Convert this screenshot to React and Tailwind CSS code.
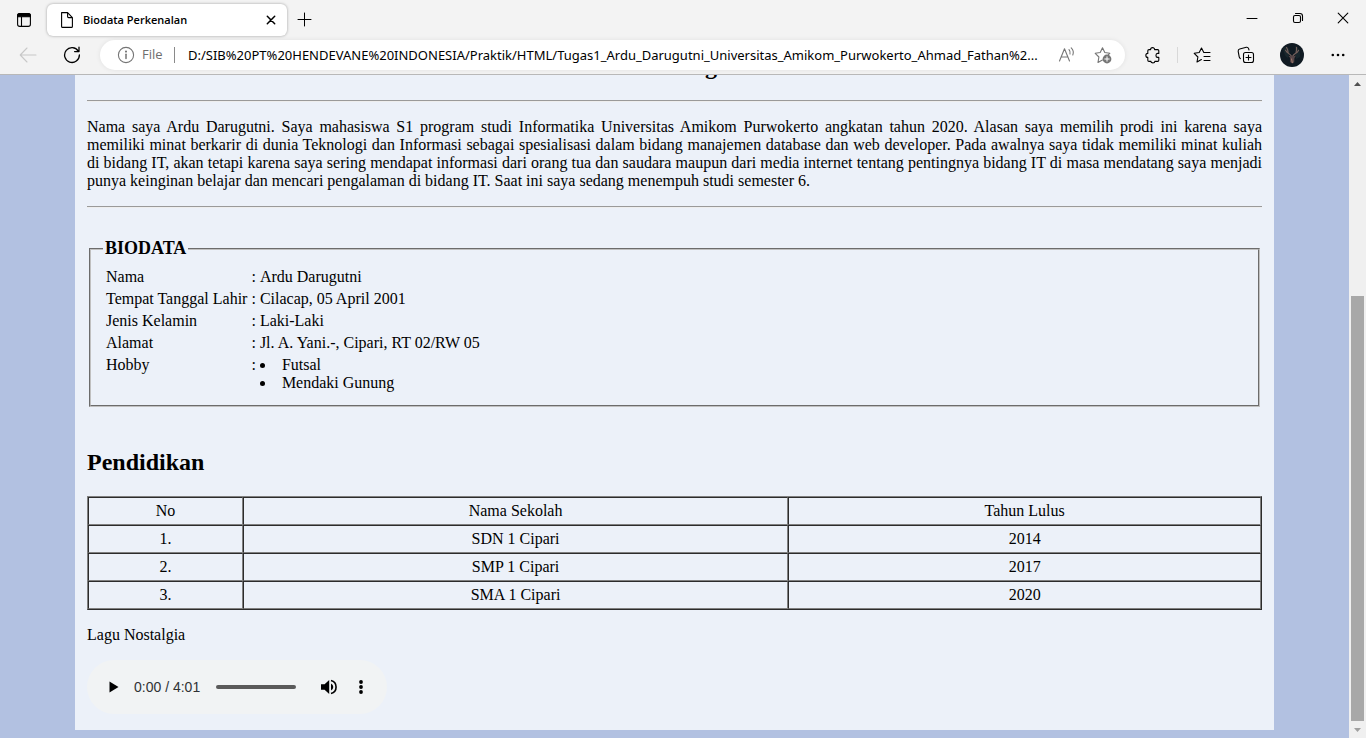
import React from "react";

const biodata = [
  ["Nama", "Ardu Darugutni"],
  ["Tempat Tanggal Lahir", "Cilacap, 05 April 2001"],
  ["Jenis Kelamin", "Laki-Laki"],
  ["Alamat", "Jl. A. Yani.-, Cipari, RT 02/RW 05"],
];

const schools = [
  ["1.", "SDN 1 Cipari", "2014"],
  ["2.", "SMP 1 Cipari", "2017"],
  ["3.", "SMA 1 Cipari", "2020"],
];

function Icon({ size = 18, children, className = "" }) {
  return (
    <svg
      width={size}
      height={size}
      viewBox={`0 0 ${size} ${size}`}
      fill="none"
      stroke="currentColor"
      strokeWidth="1.1"
      strokeLinecap="round"
      strokeLinejoin="round"
      className={`shrink-0 ${className}`}
      aria-hidden="true"
    >
      {children}
    </svg>
  );
}

function IconButton({ label, className = "", children }) {
  return (
    <button type="button" aria-label={label} className={`flex h-8 shrink-0 items-center justify-center ${className}`}>
      {children}
    </button>
  );
}

function TabStrip() {
  return (
    <div className="flex h-10 items-start">
      <IconButton label="Tab actions" className="mt-1 w-12">
        <Icon size={16}>
          <rect x="1.6" y="1.6" width="12.8" height="12.8" rx="2.2" />
          <path d="M1.6 4.8V3.8Q1.6 1.6 3.8 1.6H12.2Q14.4 1.6 14.4 3.8V4.8Z" fill="currentColor" />
          <path d="M5.5 5v9" />
        </Icon>
      </IconButton>
      <div className="mt-1 -ml-px flex h-8 w-60 items-center rounded-md bg-white pr-1 pl-3 shadow-[0_0_3px_rgba(0,0,0,0.35)]">
        <Icon size={16}>
          <path d="M2.6 .6H8.6L13.4 5.6V14.4Q13.4 15.4 12.4 15.4H3.6Q2.6 15.4 2.6 14.4Z M8.6 .6V4.6Q8.6 5.6 9.6 5.6H13.4" />
        </Icon>
        <span className="ml-2 flex-1 text-[11px] font-semibold text-black">Biodata Perkenalan</span>
        <IconButton label="Close tab" className="w-6">
          <Icon size={10}>
            <path d="M1.3 1.3l7.4 7.4M8.7 1.3L1.3 8.7" strokeWidth="1.5" />
          </Icon>
        </IconButton>
      </div>
      <IconButton label="New tab" className="mt-1 w-9">
        <Icon size={16}>
          <path d="M7.5 1v13M1 7.5h13" strokeWidth="1" />
        </Icon>
      </IconButton>
      <div className="ml-auto flex">
        <IconButton label="Minimize" className="mt-0.5 w-12">
          <Icon size={12}>
            <path d="M1 6.5h10" strokeWidth="1" />
          </Icon>
        </IconButton>
        <IconButton label="Restore" className="mt-0.5 w-11">
          <Icon size={12}>
            <rect x="1.5" y="3.5" width="7" height="7" rx="1.5" strokeWidth="1.1" />
            <path d="M3.5 1.5H8Q10.5 1.5 10.5 4V8.5" strokeWidth="1.1" />
          </Icon>
        </IconButton>
        <IconButton label="Close window" className="mt-0.5 w-[46px]">
          <Icon size={12}>
            <path d="M1.2 1.2l9.6 9.6M10.8 1.2l-9.6 9.6" strokeWidth="1.1" />
          </Icon>
        </IconButton>
      </div>
    </div>
  );
}

function Toolbar() {
  return (
    <div className="flex h-[30px] items-center pr-3">
      <IconButton label="Back" className="ml-3 w-8 text-[#c8c8c8]">
        <Icon>
          <path d="M17 9H1.5M8 2L1.2 9L8 16" />
        </Icon>
      </IconButton>
      <IconButton label="Refresh" className="ml-3 w-8">
        <Icon>
          <path d="M15.3 5.2A7.4 7.4 0 1 0 16.4 9M16 1.2V5.6H11.6" strokeWidth="1.3" />
        </Icon>
      </IconButton>
      <div className="ml-3 flex h-full min-w-0 flex-1 items-center rounded-full bg-white pl-[17px] shadow-[0_0_5px_rgba(0,0,0,0.08)]">
        <Icon className="text-[#757575]">
          <circle cx="9" cy="9" r="7.6" />
          <path d="M9 8.2v4.4" strokeWidth="1.5" />
          <circle cx="9" cy="5.6" r=".5" fill="currentColor" />
        </Icon>
        <label htmlFor="address" className="ml-[7px] w-8 text-[13px] text-[#6e6e6e]">
          File
        </label>
        <span className="h-4 w-px bg-[#8a8a8a]" />
        <input
          id="address"
          type="text"
          readOnly
          value="D:/SIB%20PT%20HENDEVANE%20INDONESIA/Praktik/HTML/Tugas1_Ardu_Darugutni_Universitas_Amikom_Purwokerto_Ahmad_Fathan%2..."
          className="ml-[13px] h-6 min-w-0 flex-1 bg-transparent font-['Noto_Sans',sans-serif] text-[13px] text-black outline-none"
        />
        <IconButton label="Read aloud" className="w-9 text-[#767676]">
          <Icon>
            <path d="M1.5 15L6.5 2.8L11.5 15M3.2 11H9.8M11 3.6Q12.7 5.4 12 8M13.2 1.8Q16.4 5 14.8 9" strokeWidth="1.1" />
          </Icon>
        </IconButton>
        <IconButton label="Add to favorites" className="mr-1 w-9 text-[#767676]">
          <Icon>
            <path d="M8.4 14L4 16.4L4.9 11L1.2 7.3L6.2 6.5L8.5 1.8L10.8 6.5L15.8 7.3L14.4 8.7" />
            <circle cx="13" cy="13" r="4.4" fill="currentColor" stroke="none" />
            <path d="M13 10.8v4.4M10.8 13h4.4" stroke="white" strokeWidth="1" />
          </Icon>
        </IconButton>
      </div>
      <IconButton label="Extensions" className="ml-3 w-8">
        <Icon>
          <path d="M5 3.6H6.6C6.6 1 10.6 1 10.6 3.6H13.6Q14.8 3.6 14.8 4.8V7.4H13.6C11.4 7.4 11.4 11.4 13.6 11.4H14.8V14.2Q14.8 15.4 13.6 15.4H10.8C10.8 17.4 7 17.4 7 15.4H5Q3.8 15.4 3.8 14.2V11.4C1.2 11.4 1.2 7.4 3.8 7.4V4.8Q3.8 3.6 5 3.6Z" />
        </Icon>
      </IconButton>
      <span className="ml-2 h-4 w-px bg-[#d8d8d8]" />
      <IconButton label="Favorites" className="ml-2 w-8">
        <Icon>
          <path d="M8.4 13.6L4 16L4.9 11L1.2 7.3L6.2 6.5L8.5 2L10.8 6.5M11 6.5H17M11 10.5H17M11 14.5H17" />
        </Icon>
      </IconButton>
      <IconButton label="Collections" className="ml-3 w-8">
        <Icon>
          <path d="M3.4 12.6Q2.5 12 2.2 10.8L1.2 5.3Q1 3.4 2.7 3L9.3 1.3Q11 1 11.6 2.6L12 4" />
          <rect x="6.5" y="6.5" width="10" height="10" rx="2" />
          <path d="M11.5 9v5M9 11.5H14" />
        </Icon>
      </IconButton>
      <IconButton label="Profile" className="ml-3.5 w-8">
        <svg width="24" height="24" viewBox="0 0 24 24" className="shrink-0" aria-hidden="true">
          <circle cx="12" cy="12" r="12" fill="#101a22" />
          <path d="M3 5Q8 2 10 8L8 15Q4 13 3 5M15 3Q21 6 20 14L16 16Z" fill="#18262c" />
          <path
            d="M11.4 13C9.8 10.4 7.4 10.6 5.6 7.2M8.2 9.8Q8 7 6.6 4.4M12.8 13C14.2 10.4 17 10.6 18.6 7.2M16 9.6Q16.8 7 16.6 4.2"
            fill="none"
            stroke="#75605c"
            strokeWidth="1.1"
            strokeLinecap="round"
          />
          <path d="M8.4 12.8L11 13.2L12.2 12.4L13.4 13.2L16 12.6L14.4 15L14.2 19.2L12.2 20.6L10.2 19L10.2 15Z" fill="#59484a" />
          <path d="M11.4 15.5L12.4 20" stroke="#a0796a" strokeWidth="1" />
        </svg>
      </IconButton>
      <IconButton label="Settings and more" className="ml-3.5 w-8">
        <Icon>
          <g fill="currentColor" stroke="none">
            <circle cx="3.8" cy="9" r="1.3" />
            <circle cx="9" cy="9" r="1.3" />
            <circle cx="14.2" cy="9" r="1.3" />
          </g>
        </Icon>
      </IconButton>
    </div>
  );
}

function Rule() {
  return <hr className="h-0.5 border-t border-b border-t-[#9a9a9a] border-b-[#eeeeee]" />;
}

function AudioPlayer() {
  return (
    <div className="mt-4 flex h-[54px] w-[300px] items-center rounded-full bg-[#f1f3f4] pl-[11px] font-['Liberation_Sans',sans-serif]">
      <IconButton label="Play" className="w-8">
        <svg width="10" height="12" viewBox="0 0 10 12" aria-hidden="true">
          <path d="M0.5 0.5L9.5 6L0.5 11.5Z" />
        </svg>
      </IconButton>
      <span className="ml-1 w-[82px] text-[14px] text-[#303234]">0:00 / 4:01</span>
      <input
        type="range"
        aria-label="Playback position"
        defaultValue="0"
        className="h-1 w-20 appearance-none rounded-full bg-[#5a5a5a] [&::-webkit-slider-thumb]:size-0 [&::-webkit-slider-thumb]:appearance-none"
      />
      <IconButton label="Mute" className="ml-[17px] w-8">
        <svg width="18" height="18" viewBox="0 0 18 18" aria-hidden="true">
          <path d="M1 6.3H4.6L9.2 2V16L4.6 11.7H1Z" />
          <path d="M11 5.4A4 4 0 0 1 11 12.6Z" />
          <path d="M11 2.5A6.7 6.7 0 0 1 11 15.5" fill="none" stroke="black" strokeWidth="1.6" />
        </svg>
      </IconButton>
      <IconButton label="More media controls" className="w-8">
        <svg width="6" height="14" viewBox="0 0 6 14" aria-hidden="true">
          <circle cx="3" cy="2" r="1.9" />
          <circle cx="3" cy="7" r="1.9" />
          <circle cx="3" cy="12" r="1.9" />
        </svg>
      </IconButton>
    </div>
  );
}

function Page() {
  const cell = "border border-t-[#2c2c2c] border-l-[#2c2c2c] border-r-[#808080] border-b-[#808080] p-1 text-center font-normal";
  return (
    <main className="min-w-0 flex-1 overflow-hidden px-[75px] pb-2 font-['Liberation_Serif',serif] text-[16px] leading-[18px] text-black">
      <article className="bg-[#ecf1f9] px-3 pb-4">
        <div className="flex h-[25px] items-start justify-center overflow-hidden">
          <h1 className="-mt-[18px] pl-[73px] text-[24px] leading-[18px] font-bold">g</h1>
        </div>
        <Rule />
        <p className="my-4 text-justify">
          Nama saya Ardu Darugutni. Saya mahasiswa S1 program studi Informatika Universitas Amikom Purwokerto angkatan
          tahun 2020. Alasan saya memilih prodi ini karena saya memiliki minat berkarir di dunia Teknologi dan Informasi
          sebagai spesialisasi dalam bidang manajemen database dan web developer. Pada awalnya saya tidak memiliki minat
          kuliah di bidang IT, akan tetapi karena saya sering mendapat informasi dari orang tua dan saudara maupun dari
          media internet tentang pentingnya bidang IT di masa mendatang saya menjadi punya keinginan belajar dan mencari
          pengalaman di bidang IT. Saat ini saya sedang menempuh studi semester 6.
        </p>
        <Rule />
        <fieldset className="mx-0.5 mt-[30px] border-2 border-[#c0c0c0] px-3 pt-1.5 pb-2.5 [border-style:groove]">
          <legend className="px-0.5 text-[18px] leading-[21px] font-bold">BIODATA</legend>
          <table className="border-separate border-spacing-0.5">
            <tbody>
              {biodata.map(([name, value]) => (
                <tr key={name}>
                  <th scope="row" className="p-px text-left font-normal">{name}</th>
                  <td className="p-px">:</td>
                  <td className="p-px">{value}</td>
                </tr>
              ))}
              <tr>
                <th scope="row" className="p-px text-left align-top font-normal">Hobby</th>
                <td className="p-px align-top">:</td>
                <td className="p-px">
                  <ul className="list-inside list-disc">
                    <li>Futsal</li>
                    <li>Mendaki Gunung</li>
                  </ul>
                </td>
              </tr>
            </tbody>
          </table>
        </fieldset>
        <h2 className="mt-[42px] mb-5 text-[24px] leading-[27px] font-bold">Pendidikan</h2>
        <table className="w-full table-fixed border-separate border-spacing-0 border border-t-[#808080] border-r-[#2c2c2c] border-b-[#2c2c2c] border-l-[#808080]">
          <thead>
            <tr>
              <th scope="col" className={`w-[13.2%] ${cell}`}>No</th>
              <th scope="col" className={`w-[46.5%] ${cell}`}>Nama Sekolah</th>
              <th scope="col" className={`w-[40.3%] ${cell}`}>Tahun Lulus</th>
            </tr>
          </thead>
          <tbody>
            {schools.map((row) => (
              <tr key={row[0]}>
                {row.map((value) => (
                  <td key={value} className={cell}>{value}</td>
                ))}
              </tr>
            ))}
          </tbody>
        </table>
        <p className="mt-4">Lagu Nostalgia</p>
        <AudioPlayer />
      </article>
    </main>
  );
}

function Scrollbar() {
  return (
    <div className="flex w-[17px] shrink-0 flex-col items-center bg-[#f0f0f0]">
      <IconButton label="Scroll up" className="h-[17px]! w-full">
        <svg width="7" height="4" viewBox="0 0 7 4" aria-hidden="true">
          <path d="M0 4L3.5 0L7 4Z" fill="#505050" />
        </svg>
      </IconButton>
      <div className="flex w-full flex-1 flex-col items-center">
        <span className="basis-0 grow-[204]" />
        <span className="w-[13px] basis-0 grow-[425] bg-[#a8a8a8]" />
      </div>
      <IconButton label="Scroll down" className="h-[17px]! w-full">
        <svg width="7" height="4" viewBox="0 0 7 4" aria-hidden="true">
          <path d="M0 0L3.5 4L7 0Z" fill="#a0a0a0" />
        </svg>
      </IconButton>
    </div>
  );
}

export default function App() {
  return (
    <div className="flex h-screen flex-col overflow-hidden bg-[#b2c1e1] font-['Open_Sans',sans-serif] text-black">
      <header className="shrink-0 border-b border-[#b8b8b8] bg-[#f3f3f3] pb-1">
        <TabStrip />
        <Toolbar />
      </header>
      <div className="flex min-h-0 flex-1">
        <Page />
        <Scrollbar />
      </div>
    </div>
  );
}
